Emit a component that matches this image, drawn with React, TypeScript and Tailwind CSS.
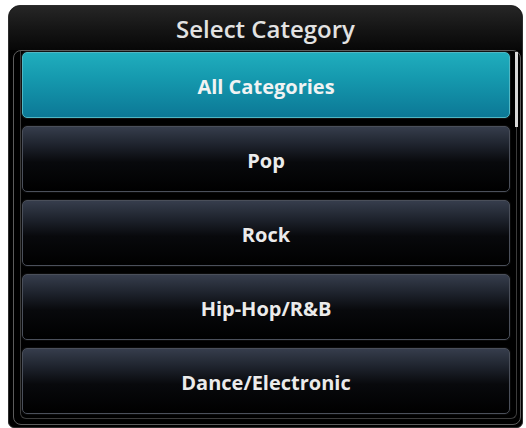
import React from "react";

const items = ["Pop", "Rock", "Hip-Hop/R&B", "Dance/Electronic"];

export default function App() {
  return (
    <div className="w-[526px] h-[428px] bg-white pt-[5px] pl-[8px] font-['Open_Sans',sans-serif]">
      <div className="w-[515px] h-[423px] rounded-t-[12px] rounded-b-[6px] bg-black border border-[#2c2c2c] flex flex-col">
        <div className="h-[44px] shrink-0 flex items-center justify-center rounded-t-[11px] bg-[linear-gradient(180deg,#262626_0%,#141414_55%,#070707_100%)] text-[24px] font-semibold text-[#e2e2e2] pt-[1px]">
          Select Category
        </div>
        <div className="ml-[4px] mr-[1px] mb-[2px] flex-1 border border-[#5c5c5c] rounded-[8px] flex flex-col">
          <div className="relative ml-[6px] mr-[3px] mb-[5px] flex-1 border-l border-r border-b border-[#3c3c3c] rounded-b-[6px]">
            <div className="absolute right-[-2px] top-[1px] w-[3px] h-[75px] bg-[#d9d9d9]" />
            <div className="flex flex-col gap-[8px] pt-[1px] pl-[1px]">
              <div className="w-[488px] h-[66px] rounded-[5px] border border-[#4fb7c4] bg-[linear-gradient(180deg,#20adbd_0%,#1599ae_40%,#0c7896_100%)] flex items-center justify-center pt-[4px] text-[20px] font-bold text-[#f0f3f3] shadow-[0_0_0_1px_#111]">
                All Categories
              </div>
              {items.map((t) => (
                <div
                  key={t}
                  className="w-[488px] h-[66px] rounded-[5px] border border-[#4a4f5a] bg-[linear-gradient(180deg,#363d4c_0%,#1e232d_28%,#08090c_55%,#000000_100%)] flex items-center justify-center pt-[4px] text-[20px] font-bold text-[#ebebeb] shadow-[0_0_0_1px_#0a0a0a]"
                >
                  {t}
                </div>
              ))}
            </div>
          </div>
        </div>
      </div>
    </div>
  );
}
